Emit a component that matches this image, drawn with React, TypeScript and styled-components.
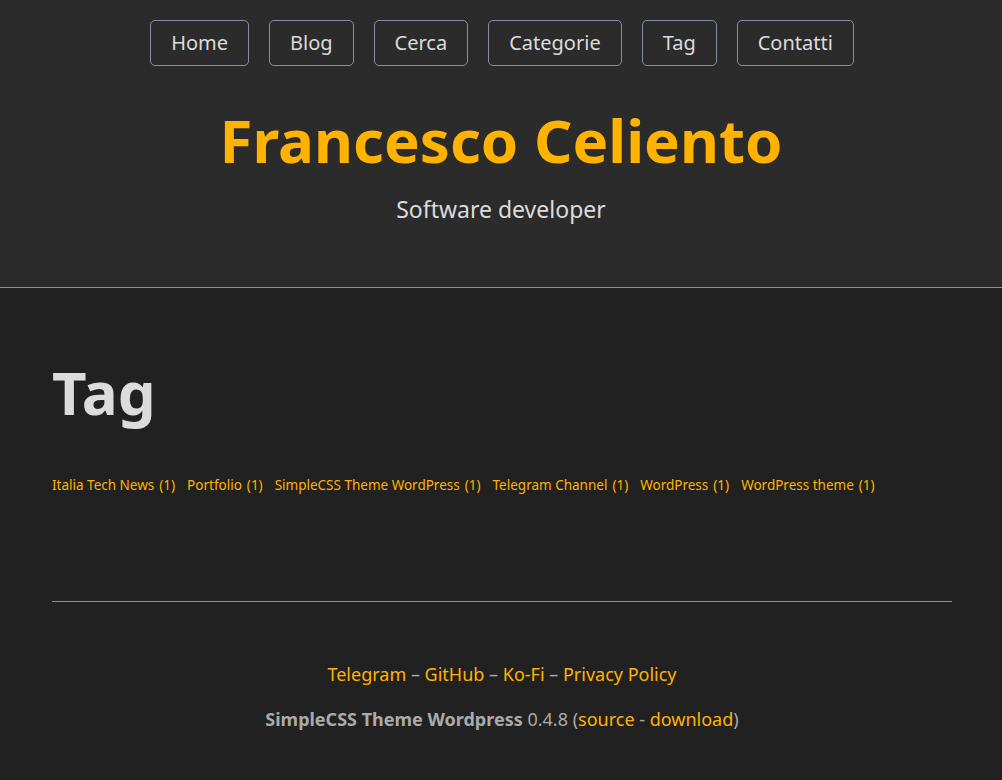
import React from "react";
import styled, { createGlobalStyle } from "styled-components";

const Global = createGlobalStyle`
  html { font-size: 20px; }
  body {
    margin: 0;
    background: #212121;
    color: #dcdcdc;
    font-family: "Noto Sans", "DejaVu Sans", sans-serif;
    line-height: 1.5;
  }
  * { box-sizing: border-box; }
`;

const Page = styled.div`
  display: grid;
  grid-template-columns: 1fr min(45rem, 90%) 1fr;
`;

const Header = styled.header`
  grid-column: 1 / -1;
  background: #2b2b2b;
  border-bottom: 1px solid #898ea4;
  text-align: center;
  padding: 20px 10px 40px;
`;

const Nav = styled.nav`
  display: flex;
  justify-content: center;
  gap: 20px;
  font-size: 20px;
  line-height: 2;
  padding-left: 2px;
`;

const NavLink = styled.a`
  display: inline-block;
  border: 1px solid #898ea4;
  border-radius: 5px;
  color: #dcdcdc;
  padding: 2px 20px;
  text-decoration: none;
`;

const SiteTitle = styled.h1`
  font-size: 60px;
  line-height: 1.1;
  font-weight: 700;
  color: #ffb300;
  margin: 41px 0 19px;
`;

const Tagline = styled.p`
  font-size: 23px;
  margin: 0 0 20px;
  color: #dcdcdc;
`;

const Main = styled.main`
  grid-column: 2;
  padding-top: 40px;
  padding-left: 1px;
`;

const PageTitle = styled.h1`
  font-size: 60px;
  line-height: 1.1;
  font-weight: 700;
  margin: 31px 0 50px;
  color: #dcdcdc;
`;

const Cloud = styled.div`
  display: flex;
  flex-wrap: wrap;
  column-gap: 12px;
  font-size: 13.5px;
  line-height: 1.5;
`;

const TagLink = styled.a`
  color: #ffb300;
  text-decoration: none;
`;

const Count = styled.span`
  margin-left: 5px;
`;

const Footer = styled.footer`
  grid-column: 2;
  margin: 106px -1px 0 1px;
  border-top: 1px solid #898ea4;
  text-align: center;
  color: #ababab;
  font-size: 18px;
  padding-top: 59px;
`;

const FooterLine = styled.p<{ $gap?: number }>`
  margin: 0 0 ${(p) => p.$gap ?? 0}px;
`;

const FLink = styled.a`
  color: #ffb300;
  text-decoration: none;
`;

const tags = [
  "Italia Tech News",
  "Portfolio",
  "SimpleCSS Theme WordPress",
  "Telegram Channel",
  "WordPress",
  "WordPress theme",
];

export default function App() {
  return (
    <>
      <Global />
      <Page>
        <Header>
          <Nav>
            {["Home", "Blog", "Cerca", "Categorie", "Tag", "Contatti"].map((n) => (
              <NavLink key={n} href="#">
                {n}
              </NavLink>
            ))}
          </Nav>
          <SiteTitle>Francesco Celiento</SiteTitle>
          <Tagline>Software developer</Tagline>
        </Header>
        <Main>
          <PageTitle>Tag</PageTitle>
          <Cloud>
            {tags.map((t) => (
              <TagLink key={t} href="#">
                {t}
                <Count>(1)</Count>
              </TagLink>
            ))}
          </Cloud>
        </Main>
        <Footer>
          <FooterLine $gap={18}>
            <FLink href="#">Telegram</FLink> – <FLink href="#">GitHub</FLink> –{" "}
            <FLink href="#">Ko-Fi</FLink> – <FLink href="#">Privacy Policy</FLink>
          </FooterLine>
          <FooterLine>
            <b>SimpleCSS Theme Wordpress</b> 0.4.8 (<FLink href="#">source</FLink> -{" "}
            <FLink href="#">download</FLink>)
          </FooterLine>
        </Footer>
      </Page>
    </>
  );
}
